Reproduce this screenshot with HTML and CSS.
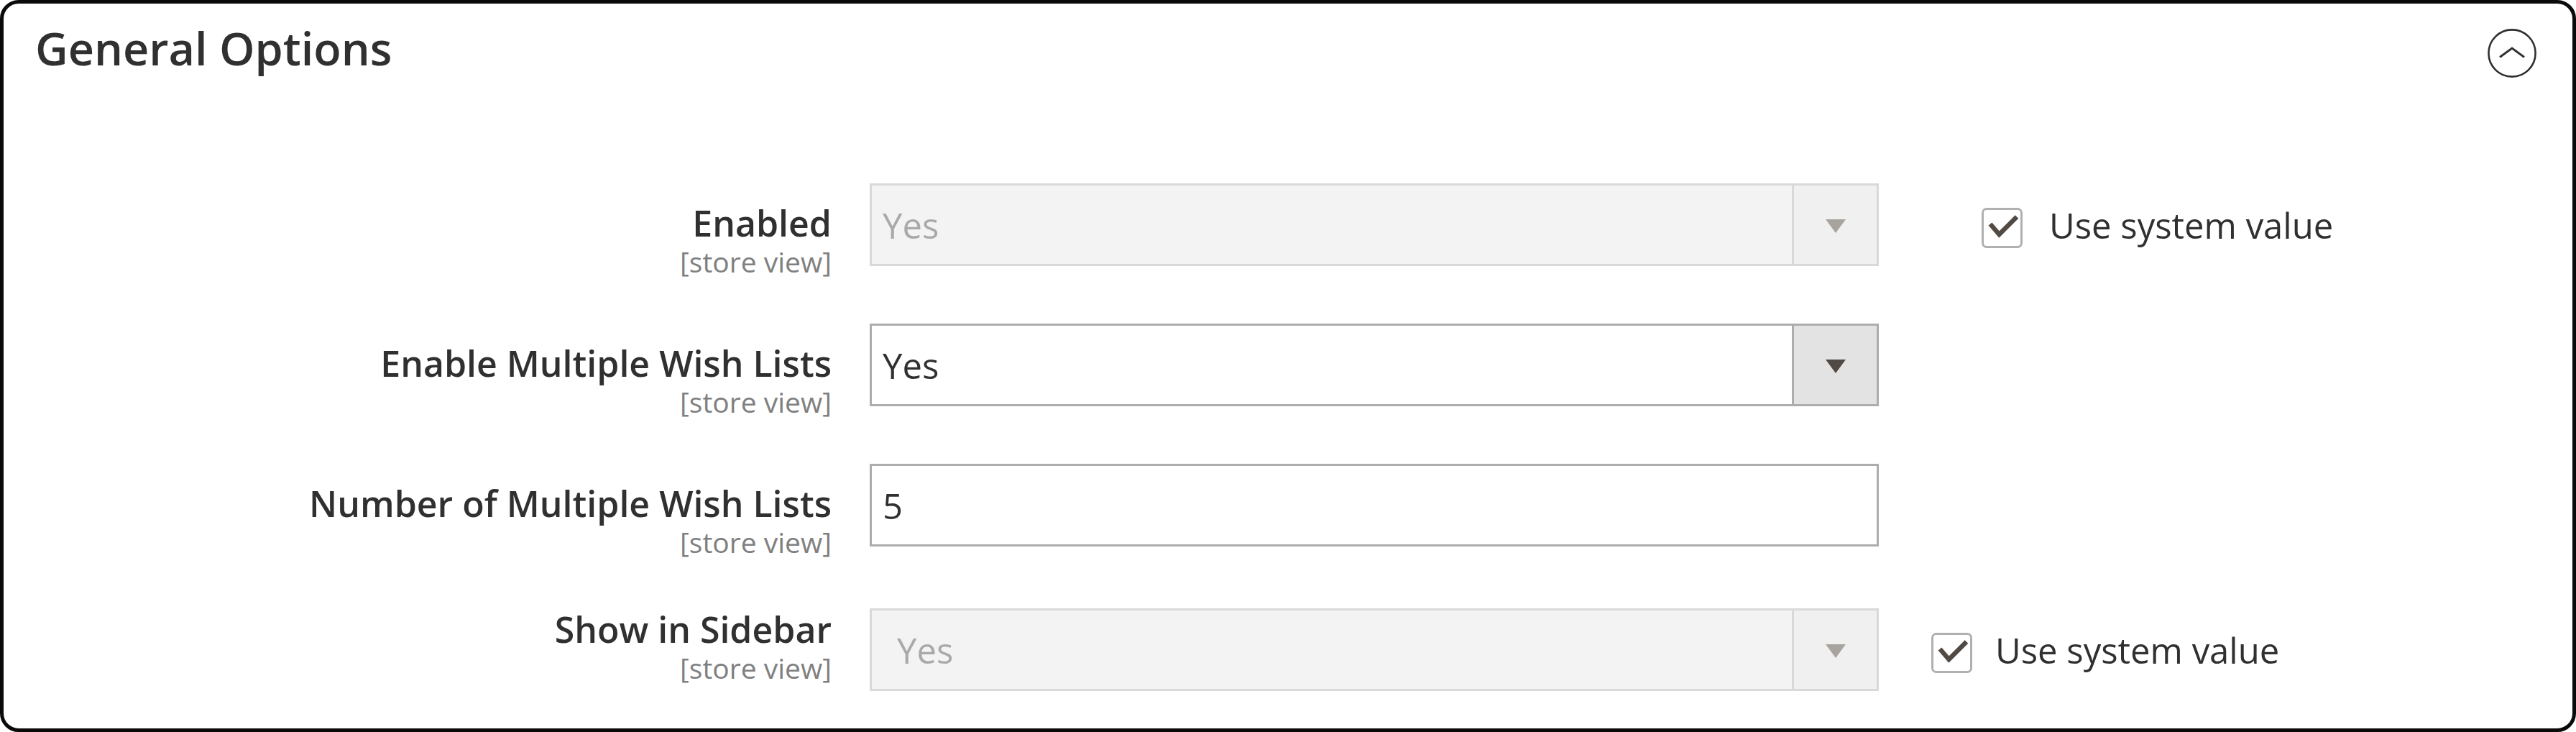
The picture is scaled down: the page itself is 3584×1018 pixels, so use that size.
FILE: index.html
```html
<!DOCTYPE html>
<html lang="en">
<head>
<meta charset="utf-8">
<title>General Options</title>
<link rel="stylesheet" href="styles.css">
</head>
<body>
<section class="panel">
  <header class="panel-head">
    <h2 class="panel-title">General Options</h2>
    <svg class="collapse-icon" viewBox="0 0 68 68" aria-hidden="true">
      <circle cx="34" cy="34" r="32.6" fill="none" stroke="#303030" stroke-width="2.6"/>
      <path d="M17 39.5 L34 27 L51 39.5" fill="none" stroke="#303030" stroke-width="2.8" stroke-linecap="butt" stroke-linejoin="miter"/>
    </svg>
  </header>

  <div class="form">
    <div class="row">
      <div class="label">
        <span class="label-text">Enabled</span>
        <span class="scope">[store view]</span>
      </div>
      <div class="control">
        <div class="select is-disabled">
          <span class="value">Yes</span>
          <span class="select-btn"><span class="arrow"></span></span>
        </div>
      </div>
      <div class="use-default">
        <span class="checkbox">
          <svg viewBox="0 0 51 50" aria-hidden="true"><path d="M9 19.5 L21.5 34 L46 9.5" fill="none" stroke="#514943" stroke-width="6.5" stroke-linejoin="miter"/></svg>
        </span>
        <span class="use-default-text">Use system value</span>
      </div>
    </div>

    <div class="row">
      <div class="label">
        <span class="label-text">Enable Multiple Wish Lists</span>
        <span class="scope">[store view]</span>
      </div>
      <div class="control">
        <div class="select">
          <span class="value">Yes</span>
          <span class="select-btn"><span class="arrow"></span></span>
        </div>
      </div>
    </div>

    <div class="row">
      <div class="label">
        <span class="label-text">Number of Multiple Wish Lists</span>
        <span class="scope">[store view]</span>
      </div>
      <div class="control">
        <div class="input"><span class="value">5</span></div>
      </div>
    </div>

    <div class="row row-sidebar">
      <div class="label">
        <span class="label-text">Show in Sidebar</span>
        <span class="scope">[store view]</span>
      </div>
      <div class="control">
        <div class="select is-disabled">
          <span class="value">Yes</span>
          <span class="select-btn"><span class="arrow"></span></span>
        </div>
      </div>
      <div class="use-default">
        <span class="checkbox">
          <svg viewBox="0 0 51 50" aria-hidden="true"><path d="M9 19.5 L21.5 34 L46 9.5" fill="none" stroke="#514943" stroke-width="6.5" stroke-linejoin="miter"/></svg>
        </span>
        <span class="use-default-text">Use system value</span>
      </div>
    </div>
  </div>
</section>
</body>
</html>
```

FILE: styles.css
```css
* {
  box-sizing: border-box;
}

html, body {
  margin: 0;
  padding: 0;
  background: #ffffff;
}

body {
  font-family: "Open Sans", "Liberation Sans", sans-serif;
  color: #303030;
}

.panel {
  width: 3584px;
  height: 1018px;
  border: 5px solid #0a0a0a;
  border-radius: 26px;
  background: #ffffff;
  overflow: hidden;
}

.panel-head {
  display: flex;
  justify-content: space-between;
  align-items: flex-start;
  padding: 24px 50px 0 44px;
}

.panel-title {
  margin: 0;
  font-size: 63px;
  line-height: 76px;
  font-weight: 600;
  color: #303030;
}

.collapse-icon {
  width: 68px;
  height: 68px;
  margin-top: 11px;
}

.form {
  display: flex;
  flex-direction: column;
  gap: 80px;
  padding-top: 147px;
}

.row {
  display: flex;
  align-items: flex-start;
  height: 115px;
}

.row-sidebar {
  margin-top: 6px;
}

.label {
  width: 1152px;
  display: flex;
  flex-direction: column;
  align-items: flex-end;
  padding-top: 26px;
}

.row-sidebar .label {
  padding-top: 0;
}

.label-text {
  font-size: 50px;
  line-height: 59px;
  font-weight: 600;
  color: #303030;
  white-space: nowrap;
}

.scope {
  margin-top: 1px;
  font-size: 39px;
  line-height: 46px;
  color: #808080;
  white-space: nowrap;
}

.control {
  margin-left: 53px;
  width: 1404px;
}

.select,
.input {
  height: 115px;
  display: flex;
  align-items: center;
  border: 3px solid #adadad;
  background: #ffffff;
  padding-left: 15px;
}

.value {
  flex: 1;
  font-size: 49px;
  color: #303030;
}

.select-btn {
  width: 118px;
  height: 100%;
  display: flex;
  align-items: center;
  justify-content: center;
  background: #e3e3e3;
  border-left: 3px solid #adadad;
}

.arrow {
  width: 0;
  height: 0;
  margin-top: 4px;
  border-left: 14px solid transparent;
  border-right: 14px solid transparent;
  border-top: 19px solid #514943;
}

.select.is-disabled {
  background: #f3f3f3;
  border-color: #d9d9d9;
}

.select.is-disabled .value {
  color: #a9a9a9;
}

.select.is-disabled .select-btn {
  background: #f0f0f0;
  border-left-color: #d9d9d9;
}

.select.is-disabled .arrow {
  border-top-color: #a8a39d;
}

.row-sidebar .select .value {
  padding-left: 20px;
}

.use-default {
  height: 115px;
  display: flex;
  align-items: center;
  margin-left: 143px;
}

.row-sidebar .use-default {
  margin-left: 73px;
}

.checkbox {
  width: 57px;
  height: 56px;
  margin-top: 9px;
  border: 3px solid #b0b0b0;
  border-radius: 7px;
  background: #ffffff;
  display: flex;
  align-items: center;
  justify-content: center;
}

.checkbox svg {
  width: 51px;
  height: 50px;
}

.use-default-text {
  margin-left: 37px;
  font-size: 49px;
  color: #303030;
  white-space: nowrap;
}

.row-sidebar .use-default-text {
  margin-left: 32px;
}
```
